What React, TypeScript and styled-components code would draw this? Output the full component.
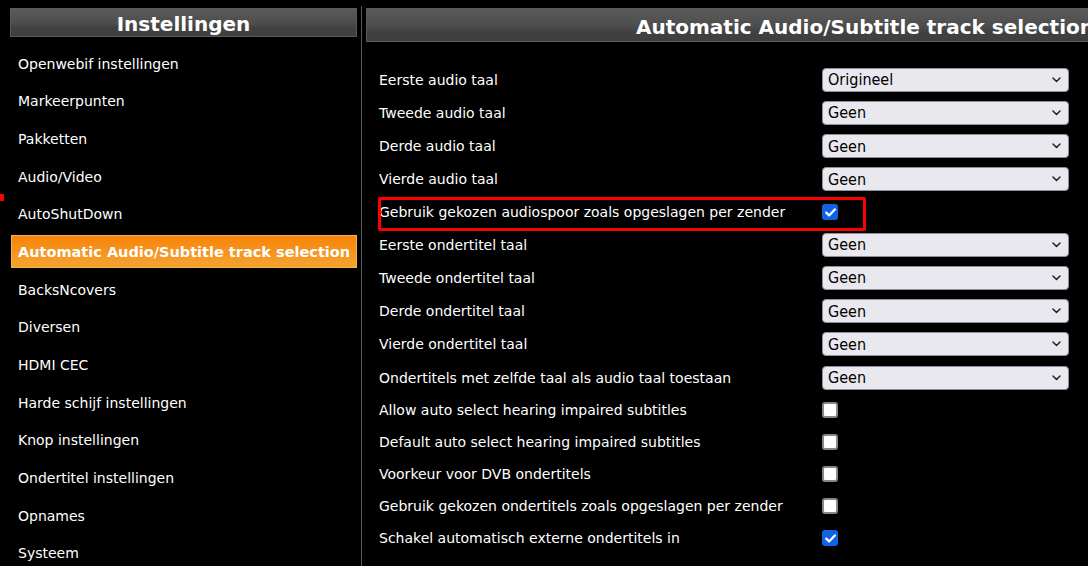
import React from "react";
import styled, { createGlobalStyle } from "styled-components";

const Global = createGlobalStyle`
  html, body { margin: 0; padding: 0; background: #000; overflow: hidden; }
  body { font-family: "DejaVu Sans", Verdana, sans-serif; color: #fff; }
`;

const Page = styled.div`
  display: flex;
  align-items: stretch;
  padding: 8px 0 0 10px;
  width: 1200px;
  height: 558px;
  position: relative;
`;

const Sidebar = styled.nav`
  width: 347px;
  flex: none;
  display: flex;
  flex-direction: column;
`;

const HeaderBar = styled.div<{ $align?: string }>`
  height: 34px;
  box-sizing: border-box;
  border: 1px solid #5a5a5a;
  background: linear-gradient(#5b5b5b 0%, #4c4c4c 55%, #414141 70%, #3f3f3f 100%);
  display: flex;
  align-items: center;
  justify-content: ${(p) => p.$align || "center"};
  padding: 3px 6px 0;
  font-weight: bold;
  font-size: 20px;
  white-space: nowrap;
`;

const MenuList = styled.ul`
  list-style: none;
  margin: 10px 0 0;
  padding: 0;
  display: flex;
  flex-direction: column;
  gap: 4.7px;
`;

const MenuItem = styled.li<{ $active?: boolean }>`
  height: 33px;
  box-sizing: border-box;
  display: flex;
  align-items: center;
  padding: 0 0 0 6px;
  margin-left: 1px;
  font-size: ${(p) => (p.$active ? "14.5px" : "14px")};
  white-space: nowrap;
  font-weight: ${(p) => (p.$active ? "bold" : "normal")};
  background: ${(p) => (p.$active ? "linear-gradient(#f6850a, #f6a231)" : "transparent")};
  border: 1px solid ${(p) => (p.$active ? "#f5b444" : "transparent")};
`;

const Divider = styled.div`
  width: 1px;
  background: #5a5a5a;
  margin: -2px 4px 0 4px;
  flex: none;
`;

const Main = styled.section`
  width: 735px;
  flex: none;
  display: flex;
  flex-direction: column;
`;

const Settings = styled.div`
  display: flex;
  flex-direction: column;
  padding: 21px 0 0 13px;
`;

const Row = styled.div<{ $h: number }>`
  height: ${(p) => p.$h}px;
  display: grid;
  grid-template-columns: 443px 247px;
  align-items: center;
  font-size: 14px;
  position: relative;
`;

const Highlight = styled.div`
  position: absolute;
  left: -1px;
  top: 1px;
  width: 488px;
  height: 34px;
  box-sizing: border-box;
  border: 3px solid #ff0000;
  border-radius: 2px;
  pointer-events: none;
`;

const SelectWrap = styled.div`
  position: relative;
  height: 24px;
`;

const Select = styled.select`
  appearance: none;
  width: 100%;
  height: 24px;
  box-sizing: border-box;
  border: 1px solid #8f8f9d;
  border-radius: 4px;
  background: #e9e8ee;
  color: #000;
  font-family: "DejaVu Sans Condensed", "Liberation Sans Narrow", "Liberation Sans", sans-serif;
  font-stretch: condensed;
  font-size: 16px;
  padding: 0 0 0 5px;
  margin: 0;
`;

const Chevron = styled.svg`
  position: absolute;
  right: 8px;
  top: 9px;
  width: 9px;
  height: 6px;
  pointer-events: none;
`;

const Box = styled.span<{ $checked?: boolean }>`
  width: 16px;
  height: 16px;
  box-sizing: border-box;
  border-radius: 3px;
  display: inline-flex;
  align-items: center;
  justify-content: center;
  background: ${(p) => (p.$checked ? "#1063e3" : "#fff")};
  border: ${(p) => (p.$checked ? "none" : "2px solid #86868c")};
`;

const RedMark = styled.div`
  position: absolute;
  left: 0;
  top: 194px;
  width: 4px;
  height: 7px;
  background: #f00;
`;

const menu = [
  "Openwebif instellingen",
  "Markeerpunten",
  "Pakketten",
  "Audio/Video",
  "AutoShutDown",
  "Automatic Audio/Subtitle track selection",
  "BacksNcovers",
  "Diversen",
  "HDMI CEC",
  "Harde schijf instellingen",
  "Knop instellingen",
  "Ondertitel instellingen",
  "Opnames",
  "Systeem",
];

type Setting =
  | { label: string; kind: "select"; value: string }
  | { label: string; kind: "check"; checked: boolean; highlight?: boolean };

const settings: Setting[] = [
  { label: "Eerste audio taal", kind: "select", value: "Origineel" },
  { label: "Tweede audio taal", kind: "select", value: "Geen" },
  { label: "Derde audio taal", kind: "select", value: "Geen" },
  { label: "Vierde audio taal", kind: "select", value: "Geen" },
  { label: "Gebruik gekozen audiospoor zoals opgeslagen per zender", kind: "check", checked: true, highlight: true },
  { label: "Eerste ondertitel taal", kind: "select", value: "Geen" },
  { label: "Tweede ondertitel taal", kind: "select", value: "Geen" },
  { label: "Derde ondertitel taal", kind: "select", value: "Geen" },
  { label: "Vierde ondertitel taal", kind: "select", value: "Geen" },
  { label: "Ondertitels met zelfde taal als audio taal toestaan", kind: "select", value: "Geen" },
  { label: "Allow auto select hearing impaired subtitles", kind: "check", checked: false },
  { label: "Default auto select hearing impaired subtitles", kind: "check", checked: false },
  { label: "Voorkeur voor DVB ondertitels", kind: "check", checked: false },
  { label: "Gebruik gekozen ondertitels zoals opgeslagen per zender", kind: "check", checked: false },
  { label: "Schakel automatisch externe ondertitels in", kind: "check", checked: true },
];

const Check = () => (
  <svg width="11" height="9" viewBox="0 0 11 9">
    <path d="M1.2 4.6 L4.1 7.4 L9.8 1.4" fill="none" stroke="#fff" strokeWidth="2.2" strokeLinecap="round" strokeLinejoin="round" />
  </svg>
);

export default function App() {
  return (
    <>
      <Global />
      <Page>
        <RedMark />
        <Sidebar>
          <HeaderBar>Instellingen</HeaderBar>
          <MenuList>
            {menu.map((m) => (
              <MenuItem key={m} $active={m.startsWith("Automatic")}>
                {m}
              </MenuItem>
            ))}
          </MenuList>
        </Sidebar>
        <Divider />
        <Main>
          <HeaderBar $align="flex-end">Automatic Audio/Subtitle track selection</HeaderBar>
          <Settings>
            {settings.map((s) => (
              <Row key={s.label} $h={s.kind === "select" ? 33.25 : 32}>
                {s.kind === "check" && s.highlight && <Highlight />}
                <span>{s.label}</span>
                {s.kind === "select" ? (
                  <SelectWrap>
                    <Select defaultValue={s.value}>
                      <option>{s.value}</option>
                    </Select>
                    <Chevron viewBox="0 0 9 6">
                      <path d="M1 1 L4.5 4.5 L8 1" fill="none" stroke="#222" strokeWidth="1.5" strokeLinecap="round" strokeLinejoin="round" />
                    </Chevron>
                  </SelectWrap>
                ) : (
                  <Box $checked={s.checked}>{s.checked && <Check />}</Box>
                )}
              </Row>
            ))}
          </Settings>
        </Main>
      </Page>
    </>
  );
}
